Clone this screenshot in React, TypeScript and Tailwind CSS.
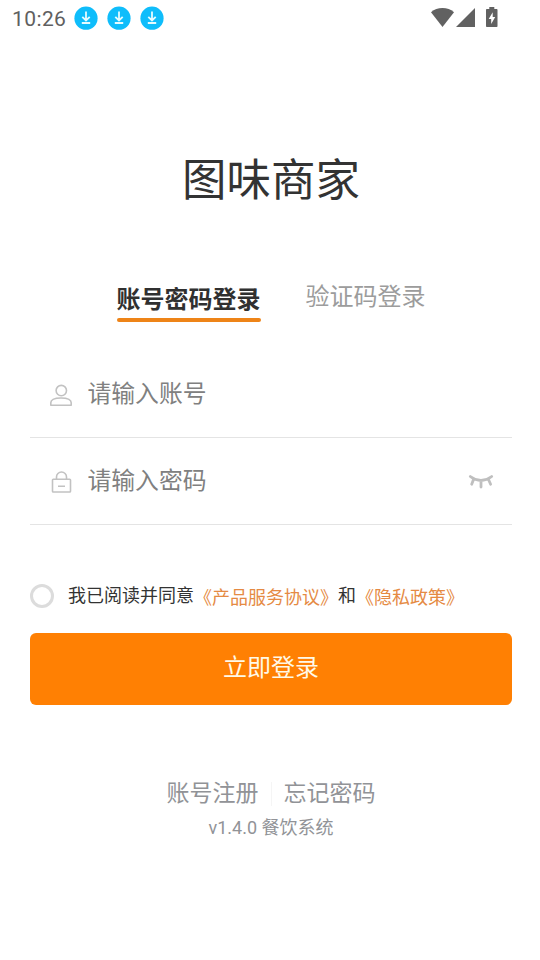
import React, { useState } from 'react';

const DownloadBadge: React.FC = () => (
  <svg viewBox="0 0 24 24" className="h-6 w-6">
    <circle cx="12" cy="12.200" r="11.6" fill="#0fbdfb" />
    <path d="M12 5.500v9M8.300 10.800l3.700 3.700 3.700-3.700M7.800 17h8.400" fill="none" stroke="#e6fbff" strokeWidth="1.8" />
  </svg>
);

const StatusBar: React.FC = () => (
  <div className="flex h-9 items-center pl-3 pr-[41px]">
    <span className="w-[62px] pt-[2px] text-[21px] leading-9 tracking-[0.4px] text-[#606060]">10:26</span>
    <div className="flex gap-[9px]">
      <DownloadBadge />
      <DownloadBadge />
      <DownloadBadge />
    </div>
    <svg viewBox="0 0 68 22" className="ml-auto h-[22px] w-[68px]" fill="#616161">
      <path d="M0 5.2C3.2 2.3 7.2 1 11.5 1S19.8 2.3 23 5.2L11.5 20Z" />
      <path d="M44 1v19H25Z" />
      <path d="M58.3 0h5v2h2.4c.5 0 .8.3.8.8v16.4c0 .5-.3.8-.8.8h-9.900c-.5 0-.8-.3-.8-.8V2.800c0-.5.300-.8.800-.8h2.500Z" />
      <path d="M61.700 5.200 57.700 12h2.500v5l4-7h-2.500Z" fill="#fff" />
    </svg>
  </div>
);

const UserIcon: React.FC = () => (
  <svg viewBox="0 0 24 24" className="h-6 w-6" fill="none" stroke="#c2c2c2" strokeWidth="1.6">
    <circle cx="12.3" cy="7.600" r="5.200" />
    <path d="M1.800 22.200v-2.400c0-3.300 4-4.800 10.200-4.800s10.200 1.500 10.200 4.800v2.400Z" strokeLinejoin="round" />
  </svg>
);

const LockIcon: React.FC = () => (
  <svg viewBox="0 0 24 24" className="h-6 w-6" fill="none" stroke="#c2c2c2" strokeWidth="1.6">
    <rect x="3.500" y="9.300" width="18" height="12.700" rx="0.800" />
    <path d="M7.500 9.300V7a5 5 0 0 1 10 0v2.300M9 16.200h7" />
  </svg>
);

const ClosedEyeIcon: React.FC = () => (
  <svg viewBox="0 0 26 16" className="h-4 w-[26px]" fill="none" stroke="#bfbfbf" strokeWidth="2.800" strokeLinecap="round">
    <path d="M2.300 2.500Q13 10.500 23.700 2.500M5.500 5.500 3.700 10.300M13 7v6M20.500 5.500l2.100 4.800" />
  </svg>
);

interface FieldProps {
  icon: React.ReactNode;
  placeholder: string;
  type?: string;
  children?: React.ReactNode;
}

const Field: React.FC<FieldProps> = ({ icon, placeholder, type = 'text', children }) => (
  <div className="flex h-[87px] items-center border-b border-[#e4e4e4] pl-[19px] pr-[18px]">
    <span className="pt-[1px]">{icon}</span>
    <input
      type={type}
      placeholder={placeholder}
      className="ml-[14.500px] h-9 min-w-0 flex-1 text-[23.800px] text-[#333] outline-none placeholder:text-[#808080]"
    />
    {children}
  </div>
);

export default function App() {
  const [agreed, setAgreed] = useState(false);

  return (
    <div className="h-[960px] w-[540px] overflow-hidden bg-white font-['Roboto','Noto_Sans_CJK_SC',sans-serif]">
      <StatusBar />
      <main className="flex flex-col pl-[30px] pr-7">
        <h1 className="mt-[117px] h-14 text-center text-[44.500px] leading-[56px] text-[#333]">图味商家</h1>

        <div className="mt-[72px] flex pl-[86.500px]">
          <button className="flex h-[41px] w-[144px] flex-col whitespace-nowrap text-[24px] font-bold leading-[38px] text-[#303030]">
            账号密码登录
            <span className="-mt-px h-1 w-full rounded-full bg-[#ee8418]" />
          </button>
          <button className="ml-[45px] h-8 text-[24px] leading-[33px] text-[#9c9c9c]">验证码登录</button>
        </div>

        <div className="mt-[29px]">
          <Field icon={<UserIcon />} placeholder="请输入账号" />
          <Field icon={<LockIcon />} placeholder="请输入密码" type="password">
            <span className="pt-[2px]">
              <ClosedEyeIcon />
            </span>
          </Field>
        </div>

        <div className="mt-[59px] flex h-6 items-center whitespace-nowrap text-[18px] leading-6 text-[#333]">
          <button
            onClick={() => setAgreed(!agreed)}
            className={`h-6 w-6 rounded-full border-[3px] border-[#dcdcdc] ${agreed ? 'bg-[#ff8003]' : 'bg-white'}`}
          />
          <span className="ml-[14px]">我已阅读并同意</span>
          <a className="pt-[3px] text-[#e58a43]">《产品服务协议》</a>
          <span>和</span>
          <a className="pt-[3px] text-[#e58a43]">《隐私政策》</a>
        </div>

        <button className="mt-[25px] h-[72px] rounded-md bg-[#ff8003] pb-[2px] text-[24px] leading-9 text-[#fff9e8]">
          立即登录
        </button>

        <div className="mt-[75px] flex h-7 items-center justify-center text-[23px] leading-7 text-[#919397]">
          <a>账号注册</a>
          <span className="mx-3 h-6 w-px bg-[#f5f5f5]" />
          <a>忘记密码</a>
        </div>
        <p className="mt-[8px] text-center text-[18px] leading-6 text-[#919397]">v1.4.0 餐饮系统</p>
      </main>
    </div>
  );
}
